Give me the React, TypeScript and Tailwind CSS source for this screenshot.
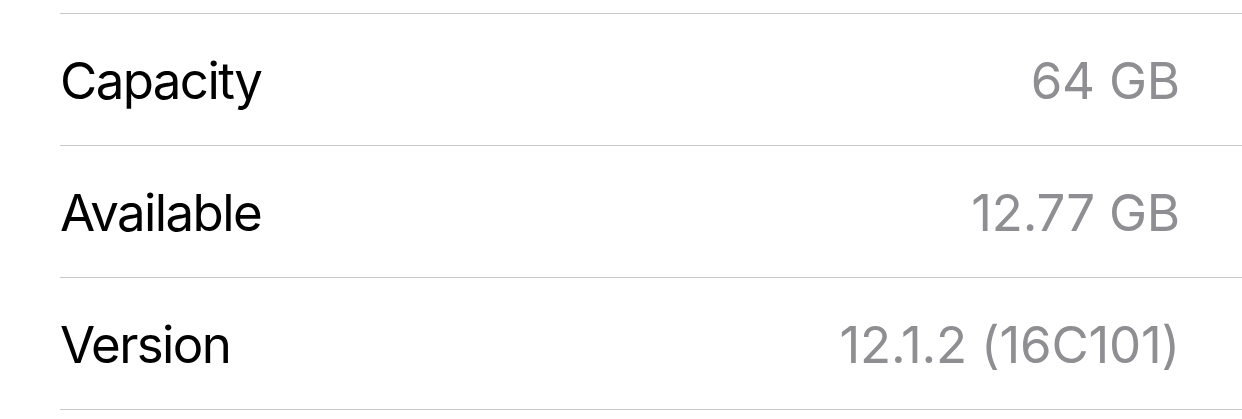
const rows = [
  { label: 'Capacity', value: '64 GB' },
  { label: 'Available', value: '12.77 GB' },
  { label: 'Version', value: '12.1.2 (16C101)' },
]

export default function App() {
  return (
    <div className="min-h-screen bg-white pt-[13px] font-['Inter','Liberation_Sans',sans-serif]">
      <div className="ml-[60px] border-t border-[#c8c7cc]">
        {rows.map(row => (
          <div
            key={row.label}
            className="flex h-[132px] items-center justify-between border-b border-[#c8c7cc] pr-[62px] pt-[4px] text-[51px]"
          >
            <span className="text-black tracking-[-1.6px]">{row.label}</span>
            <span className="text-[#8e8e93] tracking-[-0.2px]">{row.value}</span>
          </div>
        ))}
      </div>
    </div>
  )
}
